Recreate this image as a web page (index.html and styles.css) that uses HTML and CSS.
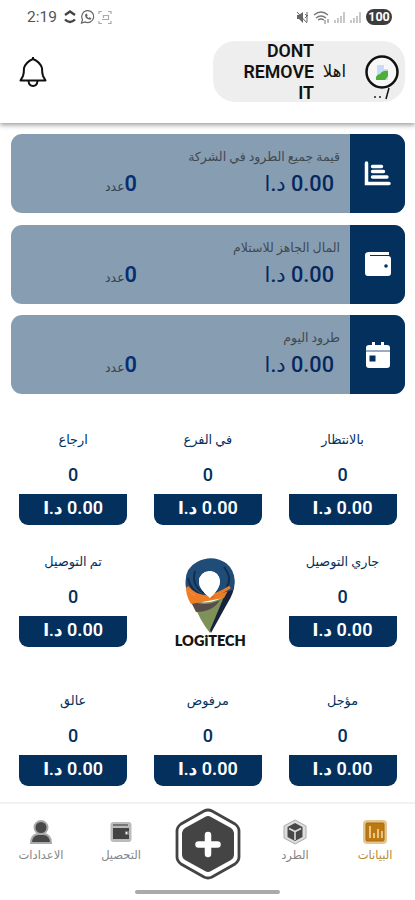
FILE: index.html
```html
<!DOCTYPE html>
<html lang="ar" dir="rtl">
<head>
<meta charset="utf-8">
<meta name="viewport" content="width=device-width, initial-scale=1">
<title>Logitech</title>
<link rel="stylesheet" href="styles.css">
</head>
<body>
<header class="header">
  <div class="status" dir="ltr">
    <span class="time">2:19</span>
    <svg class="status-left" width="50" height="16" viewBox="0 0 50 16" fill="none">
      <path d="M2 6L7 2.500L12 6M2 10.500Q7 15.500 12 10.500" stroke="#444" stroke-width="2.400"/>
      <path d="M18.500 14l1-3.500a6 6 0 1 1 2.500 2.400z" stroke="#666" stroke-width="1.200"/>
      <path d="M22 5.500q0 5 5.500 5.200l1-1.500-2-1-1 .8-1.500-1.500.7-1-1-2z" fill="#666"/>
      <path d="M36 5V2.500h3M45 2.500h3V5M36 12v2.500h3M45 14.500h3V12M39 10.500h6M40.500 9V6.500h5V11" stroke="#aaa" stroke-width="1.200"/>
    </svg>
    <svg class="status-right" width="68" height="16" viewBox="0 0 68 16" fill="none">
      <path d="M1 6h2l4-3v11L3 10H1z" fill="#666"/><path d="M1 3l10 11M9 5l2 2M9 9l3-3M11 3v10" stroke="#666"/>
      <path d="M18 6q7-6 14 0M20 9q5-4 10 0M22 11q3-2 6 0" stroke="#777" stroke-width="1.300"/><path d="M29 11v4M32 10v4" stroke="#777"/>
      <path d="M39 14v-3M42 14V9M45 14V7M48 14V3M55 14v-3M58 14V9M61 14V7M64 14V3" stroke="#bbb" stroke-width="1.600"/>
    </svg>
    <span class="battery">100</span>
  </div>
  <div class="topbar">
    <div class="account">
      <div class="avatar">
        <svg width="34" height="48" viewBox="0 0 34 48" fill="none">
          <circle cx="17" cy="17" r="15.500" fill="#f7f7f7" stroke="#111" stroke-width="2.500"/>
          <path d="M12 10h7l4 4v11H12z" fill="#c5dcfa"/><path d="M19 10v4h4" fill="#fff"/>
          <path d="M11 25q-1-5 4-6 3-4 8-3v5l-3 4z" fill="#4fae36"/>
          <path d="M24 33L21 44" stroke="#111" stroke-width="1.500"/>
          <path d="M9 42h2M14 42h2" stroke="#555" stroke-width="2"/>
        </svg>
      </div>
      <span class="hello">اهلا</span>
      <strong class="username">DONT REMOVE IT</strong>
    </div>
    <svg class="bell" width="28" height="32" viewBox="0 0 28 32" fill="none" stroke="#111" stroke-width="2" stroke-linejoin="round">
      <path d="M14 1v2M1.500 24.500L4 20Q5 17 5 12Q7 6 14 3Q21 6 23 12q0 5 1 8l2.500 4.500z"/><path d="M9.500 25q.5 5 4.500 5t4.500-5"/>
    </svg>
  </div>
</header>
<main>
  <section class="totals">
    <article class="total">
      <div class="total-icon"><svg width="28" height="26" viewBox="0 0 28 26" fill="none" stroke="#fff" stroke-width="3.500" stroke-linecap="round"><path d="M2.500 2v20.500H25"/><path d="M8.500 5.500h9M8.500 10.500h11M8.500 16h14.500" stroke-width="3.400"/></svg></div>
      <div class="total-body"><p class="total-label">قيمة جميع الطرود في الشركة</p><div class="total-row"><span class="amount">0.00 <i>د.ا</i></span><span class="count">0<i>عدد</i></span></div></div>
    </article>
    <article class="total">
      <div class="total-icon"><svg width="28" height="26" viewBox="0 0 28 26"><path d="M5 1h20v3H6v1h18q3 0 3 3v14q0 3-3 3H4q-3 0-3-3V4q0-3 4-3z" fill="#fff"/><circle cx="22" cy="15" r="1.800" fill="#03305d"/></svg></div>
      <div class="total-body"><p class="total-label">المال الجاهز للاستلام</p><div class="total-row"><span class="amount">0.00 <i>د.ا</i></span><span class="count">0<i>عدد</i></span></div></div>
    </article>
    <article class="total">
      <div class="total-icon"><svg width="26" height="28" viewBox="0 0 26 28"><path d="M4 4h3V1h3v3h6V1h3v3h3q3 0 3 3v2H1V7q0-3 3-3zM1 11h24v13q0 3-3 3H4q-3 0-3-3z" fill="#fff"/><path d="M1 9h24v2H1z" fill="#9aacbd"/><path d="M4.500 14.500h6v6h-6z" fill="#03305d"/></svg></div>
      <div class="total-body"><p class="total-label">طرود اليوم</p><div class="total-row"><span class="amount">0.00 <i>د.ا</i></span><span class="count">0<i>عدد</i></span></div></div>
    </article>
  </section>
  <section class="states">
    <article class="state"><h2>بالانتظار</h2><b>0</b><p>0.00 <i>د.ا</i></p></article>
    <article class="state"><h2>في الفرع</h2><b>0</b><p>0.00 <i>د.ا</i></p></article>
    <article class="state"><h2>ارجاع</h2><b>0</b><p>0.00 <i>د.ا</i></p></article>
    <article class="state"><h2>جاري التوصيل</h2><b>0</b><p>0.00 <i>د.ا</i></p></article>
    <div class="brand">
      <svg width="52" height="76" viewBox="0 0 52 76">
        <path d="M8 42Q25 49 45 36L26 75Q16 63 8 42z" fill="#7d9159"/>
        <path d="M6 42Q20 50 36 42Q29 54 12 54z" fill="#584c4b"/>
        <path d="M49 16Q54 29 43 46L27 75l-1-3L42 34z" fill="#17233c"/>
        <path d="M2 25Q4 37 14 38Q30 41 45 31L40 40Q24 43 7 46Q1 37 2 25z" fill="#ee7d25"/>
        <path fill-rule="evenodd" d="M2 30Q-1 11 13 4Q28-4 42 5Q54 15 49 32L42 34Q36 35 28 40Q14 38 10 34zM26 13Q15 14 15 24Q15 31 26 40Q36 31 36 23Q35 14 26 13z" fill="#204c78"/>
        <path d="M4 20Q7 35 22 38M11 13Q7 28 20 35M40 9Q49 20 42 31" fill="none" stroke="#132b4c" stroke-width="1.800"/>
        <path d="M3 29Q11 39 25 39Q37 35 46 29" fill="none" stroke="#ee7d25" stroke-width="3"/>
        <path d="M26 13Q15 14 15 24Q15 31 26 40Q36 31 36 23Q35 14 26 13z" fill="#fff"/>
      </svg>
      <span>LOGiTECH</span>
    </div>
    <article class="state"><h2>تم التوصيل</h2><b>0</b><p>0.00 <i>د.ا</i></p></article>
    <article class="state"><h2>مؤجل</h2><b>0</b><p>0.00 <i>د.ا</i></p></article>
    <article class="state"><h2>مرفوض</h2><b>0</b><p>0.00 <i>د.ا</i></p></article>
    <article class="state"><h2>عالق</h2><b>0</b><p>0.00 <i>د.ا</i></p></article>
  </section>
</main>
<nav class="nav">
  <div class="tabs">
    <a class="tab active"><svg width="26" height="26" viewBox="0 0 26 26"><rect x="1" y="1" width="24" height="24" rx="4" fill="#e3c78e"/><rect x="4" y="4" width="18" height="18" rx="1" fill="#bd7810" stroke="#a86a12"/><path d="M8 7v12M12 14v5M16 10v9M20 12v7" stroke="#f0d9ac" stroke-width="1.600"/></svg><span>البيانات</span></a>
    <a class="tab"><svg width="26" height="26" viewBox="0 0 26 26"><path d="M13 1l11 6v12l-11 6L2 19V7z" fill="#ddd" stroke="#aaa"/><path d="M13 4l7.500 4v10L13 22l-7.500-4V8z" fill="#484848"/><path d="M7 9.500l6 3 6-3M13 12.500V21" fill="none" stroke="#ddd" stroke-width="1.600"/></svg><span>الطرد</span></a>
    <a class="add"><svg width="66" height="72" viewBox="0 0 66 72"><path d="M29 3q4-2 8 0l23 13q4 3 4 7v26q0 4-4 7L37 69q-4 2-8 0L6 56q-4-3-4-7V23q0-4 4-7z" fill="#fff" stroke="#444" stroke-width="2.800"/><path d="M30 9q3-2 6 0l20 11q3 2 3 5v22q0 3-3 5L36 63q-3 2-6 0L10 52q-3-2-3-5V25q0-3 3-5z" fill="#444"/><path d="M33 27v19M23.500 36.500h19" stroke="#fff" stroke-width="6.500" stroke-linecap="round"/></svg></a>
    <a class="tab"><svg width="26" height="26" viewBox="0 0 26 26"><rect x="2.500" y="3" width="21" height="20" rx="3" fill="#bbb"/><path d="M5 9h16v11H5z" fill="#444"/><path d="M5 6h15" stroke="#777" stroke-width="2"/><path d="M17 12h4v4h-4z" fill="#777"/><circle cx="18.500" cy="14" r="1" fill="#fff"/></svg><span>التحصيل</span></a>
    <a class="tab"><svg width="26" height="26" viewBox="0 0 26 26" fill="#484848" stroke="#aaa" stroke-width="2"><path d="M3 24q0-8 7-9h6q7 1 7 9z"/><circle cx="13" cy="8.500" r="6.500"/></svg><span>الاعدادات</span></a>
  </div>
  <div class="home-bar"></div>
</nav>
</body>
</html>
```
FILE: styles.css
```css
* { box-sizing: border-box; }
body { margin: 0; width: 415px; height: 900px; overflow: hidden; display: flex; flex-direction: column; background: #fff; color: #03305d; font-family: Roboto, "DejaVu Sans", sans-serif; }
p, h2 { margin: 0; }
i { font-style: normal; }
svg { display: block; flex: none; }
.header { height: 123px; flex: none; background: #fff; box-shadow: 0 2px 5px rgba(0,0,0,.4); }
.status { height: 34px; display: flex; align-items: center; padding: 0 23px 0 27px; }
.time { width: 36px; font: 15.500px Roboto, sans-serif; color: #555; }
.status-right { margin-left: auto; }
.battery { width: 26px; height: 16px; margin-left: 2px; border-radius: 8px; background: #3c3c3c; color: #fff; font: 700 12.500px/16px Roboto, sans-serif; text-align: center; }
.topbar { display: flex; justify-content: space-between; padding: 7px 10px 0 19px; }
.account { width: 192px; height: 61px; display: flex; align-items: center; padding-right: 6px; border-radius: 22px; background: #eee; color: #111; }
.avatar { width: 34px; height: 48px; margin-top: 14px; }
.hello { width: 32px; margin-right: 19px; font-size: 16.500px; line-height: 20px; white-space: nowrap; }
.username { width: 76px; font-size: 17.800px; font-weight: 600; line-height: 21px; direction: ltr; text-align: right; }
.bell { margin-top: 15px; }
.totals { display: flex; flex-direction: column; gap: 11.500px; padding: 11px 10px 0 11px; }
.total { height: 79px; display: flex; overflow: hidden; border-radius: 11px; background: #879eb2; }
.total-icon { width: 55px; display: flex; align-items: center; justify-content: center; background: #03305d; }
.total-body { flex: 1; padding: 13px 10px 0 0; }
.total-label { height: 20px; font-size: 12.500px; line-height: 20px; color: #3f4952; white-space: nowrap; }
.total-row { height: 34px; display: flex; align-items: baseline; padding-right: 6px; line-height: 34px; white-space: nowrap; }
.amount { width: 197px; font-size: 21.700px; font-weight: 500; color: #06285f; }
.amount i { font-size: 21px; }
.count { font-size: 21.700px; font-weight: 600; color: #062e70; }
.count i { font-size: 12.500px; font-weight: 400; color: #35434f; }
.states { display: grid; grid-template-columns: repeat(3, 108px); column-gap: 26.700px; grid-template-rows: 122px 139px 110px; padding: 30px 18.500px 0; }
.state { display: flex; flex-direction: column; align-items: center; }
.state h2 { height: 32px; font-size: 12.800px; font-weight: 400; line-height: 32px; white-space: nowrap; }
.state b { height: 38px; font-size: 18px; font-weight: 500; line-height: 37px; }
.state p { width: 108px; height: 31px; border-radius: 0 0 9px 9px; background: #03305d; color: #fff; font-size: 18px; font-weight: 600; line-height: 28px; text-align: center; white-space: nowrap; }
.state p i { font-size: 17px; }
.brand { display: flex; flex-direction: column; align-items: center; padding: 12px 0 0 5px; }
.brand span { margin-top: -1px; font: 800 14.500px/16px Lato, sans-serif; color: #151515; }
.nav { margin-top: auto; height: 98px; flex: none; border-top: 2px solid #f2f2f2; }
.tabs { display: flex; height: 78px; padding: 0 0 0 1px; }
.tab { width: 80px; display: flex; flex-direction: column; align-items: center; padding-top: 15px; color: #858585; }
.tab span { margin-top: 1px; font-size: 11.500px; line-height: 19px; white-space: nowrap; }
.tab.active { color: #b68b36; }
.add { width: 94px; display: flex; justify-content: center; padding-top: 4px; }
.home-bar { width: 145px; height: 4px; margin: 8px auto 0; border-radius: 3px; background: #aaa; }
```
